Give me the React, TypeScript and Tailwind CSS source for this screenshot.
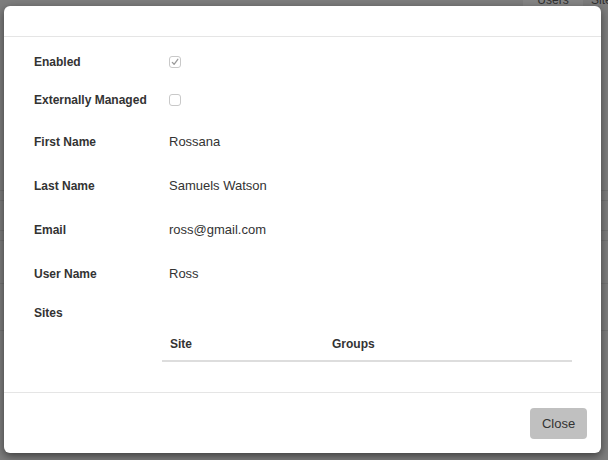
import React from "react";

function Check({ checked }: { checked?: boolean }) {
  return (
    <div className="w-[12px] h-[12px] rounded-[3px] border border-[#c9c9c9] bg-white flex items-center justify-center">
      {checked && (
        <svg width="8" height="8" viewBox="0 0 8 8">
          <path d="M1.3 4.4 L3.1 6.3 L6.8 1.3" fill="none" stroke="#9a9a9a" strokeWidth="1.3" strokeLinecap="round" strokeLinejoin="round" />
        </svg>
      )}
    </div>
  );
}

function Row({ label, children, h, extra = "" }: { label: string; children?: React.ReactNode; h: string; extra?: string }) {
  return (
    <div className={`flex items-center ${h} ${extra}`}>
      <div className="w-[135px] shrink-0 text-[12px] font-bold text-[#333]">{label}</div>
      <div className="text-[13px] text-[#333]">{children}</div>
    </div>
  );
}

export default function App() {
  return (
    <div className="relative w-[608px] h-[460px] overflow-hidden bg-[#7d7d7d] font-['Liberation_Sans',Arial,sans-serif]">
      {/* background page (under overlay) */}
      <div className="flex flex-col w-full h-full">
        <div className="flex justify-end h-[14px] items-start">
          <div className="w-[60px] h-[14px] bg-[#858585] flex justify-center">
            <span className="text-[12px] leading-[12px] mt-[-6px] text-[#2f2f2f]">Users</span>
          </div>
          <div className="w-[25px] h-[14px] pl-[8px]">
            <span className="text-[12px] leading-[12px] mt-[-6px] block text-[#2f2f2f]">Sites</span>
          </div>
        </div>
        <div className="h-[176px]" />
        <div className="h-[1px] bg-[#737373]" />
        <div className="h-[9px]" />
        <div className="h-[1px] bg-[#737373]" />
        <div className="h-[29px]" />
        <div className="h-[1px] bg-[#737373]" />
        <div className="h-[9px]" />
        <div className="h-[1px] bg-[#737373]" />
        <div className="h-[42px]" />
        <div className="h-[1px] bg-[#737373]" />
        <div className="h-[46px]" />
        <div className="h-[1px] bg-[#737373]" />
      </div>

      {/* modal */}
      <div className="absolute left-[4px] top-[6px] w-[597px] h-[447px] bg-white rounded-[6px] shadow-[0_3px_9px_rgba(0,0,0,0.5)] flex flex-col">
        <div className="h-[31px] border-b border-[#e5e5e5] shrink-0" />
        <div className="flex-1 pl-[30px] pt-[6px]">
          <Row label="Enabled" h="h-[38px]">
            <Check checked />
          </Row>
          <Row label="Externally Managed" h="h-[37px]">
            <Check />
          </Row>
          <Row label="First Name" h="h-[44px]" extra="mt-[2px]">Rossana</Row>
          <Row label="Last Name" h="h-[44px]">Samuels Watson</Row>
          <Row label="Email" h="h-[44px]">ross@gmail.com</Row>
          <Row label="User Name" h="h-[44px]">Ross</Row>
          <div className="h-[34px] flex items-center text-[12px] font-bold text-[#333]">Sites</div>
          <div className="ml-[128px] w-[410px] flex h-[32px] pb-[3px] items-center border-b-2 border-[#dddddd] text-[12px] font-bold text-[#333]">
            <div className="w-[162px] pl-[8px]">Site</div>
            <div className="pl-[8px]">Groups</div>
          </div>
        </div>
        <div className="h-[61px] border-t border-[#e5e5e5] shrink-0 flex items-start justify-end pt-[15px] pr-[14px]">
          <button className="w-[57px] h-[31px] rounded-[4px] bg-[#c0c0c0] text-[13px] text-[#333]">Close</button>
        </div>
      </div>
    </div>
  );
}
